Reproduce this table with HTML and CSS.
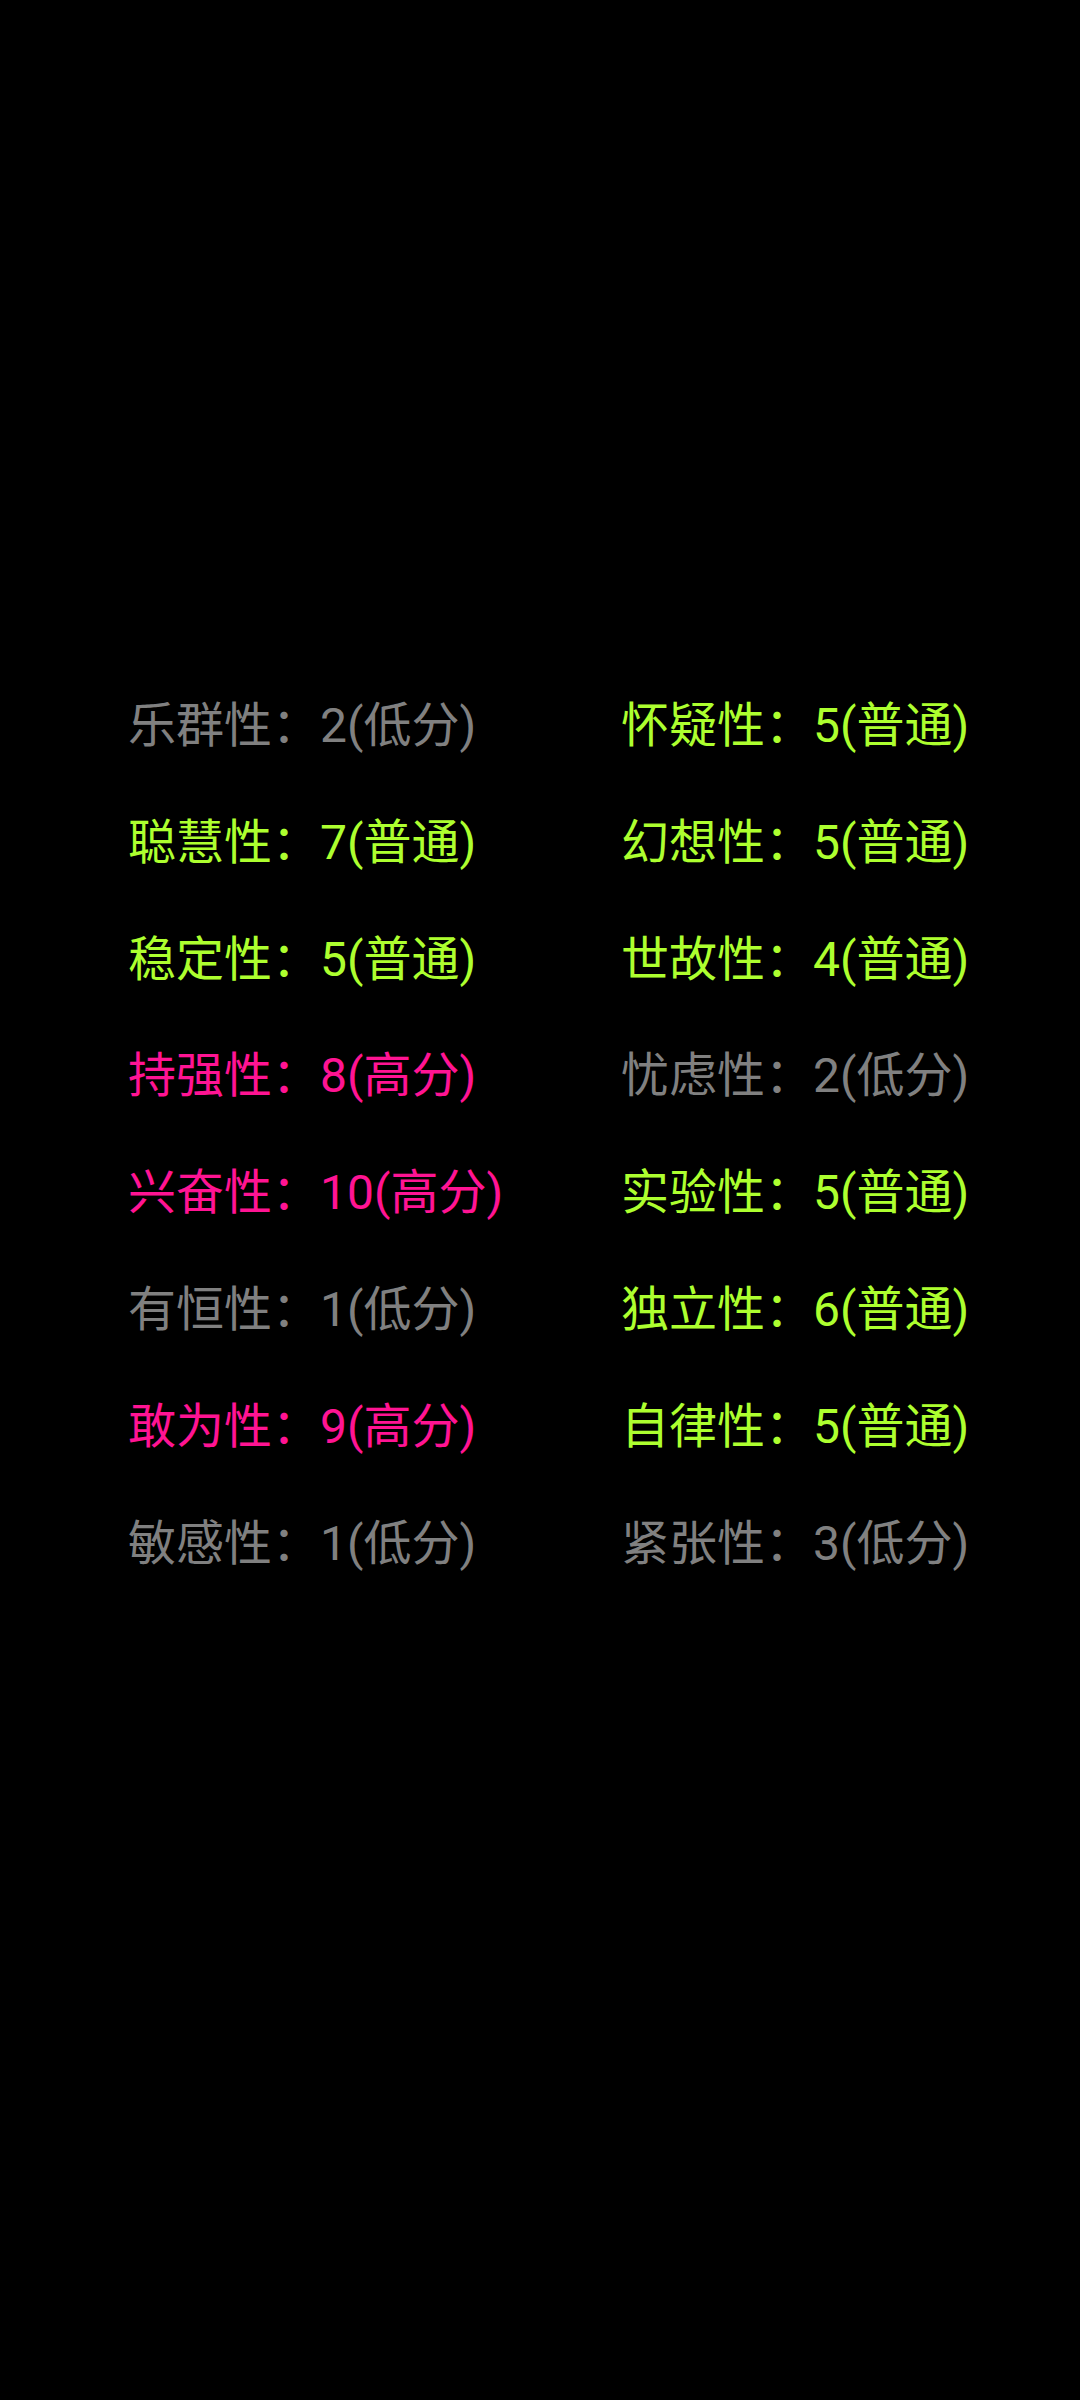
FILE: index.html
```html
<!DOCTYPE html>
<html lang="zh-CN">
<head>
<meta charset="utf-8">
<link rel="stylesheet" href="styles.css">
</head>
<body>
<div class="page">
  <div class="grid">
    <div class="item low">乐群性：2(低分)</div>
    <div class="item mid">怀疑性：5(普通)</div>
    <div class="item mid">聪慧性：7(普通)</div>
    <div class="item mid">幻想性：5(普通)</div>
    <div class="item mid">稳定性：5(普通)</div>
    <div class="item mid">世故性：4(普通)</div>
    <div class="item high">持强性：8(高分)</div>
    <div class="item low">忧虑性：2(低分)</div>
    <div class="item high">兴奋性：10(高分)</div>
    <div class="item mid">实验性：5(普通)</div>
    <div class="item low">有恒性：1(低分)</div>
    <div class="item mid">独立性：6(普通)</div>
    <div class="item high">敢为性：9(高分)</div>
    <div class="item mid">自律性：5(普通)</div>
    <div class="item low">敏感性：1(低分)</div>
    <div class="item low">紧张性：3(低分)</div>
  </div>
</div>
</body>
</html>
```
FILE: styles.css
```css
html, body {
  margin: 0;
  padding: 0;
  background: #000;
}
.page {
  width: 1080px;
  height: 2400px;
  background: #000;
  padding-top: 668px;
  box-sizing: border-box;
}
.grid {
  display: grid;
  grid-template-columns: 493px auto;
  padding-left: 128px;
}
.item {
  font-family: Roboto, "Noto Sans CJK SC", sans-serif;
  font-size: 48px;
  line-height: 116.8px;
  height: 116.8px;
  white-space: nowrap;
}
.low { color: #808080; }
.mid { color: #adff2f; }
.high { color: #ff1493; }
```
